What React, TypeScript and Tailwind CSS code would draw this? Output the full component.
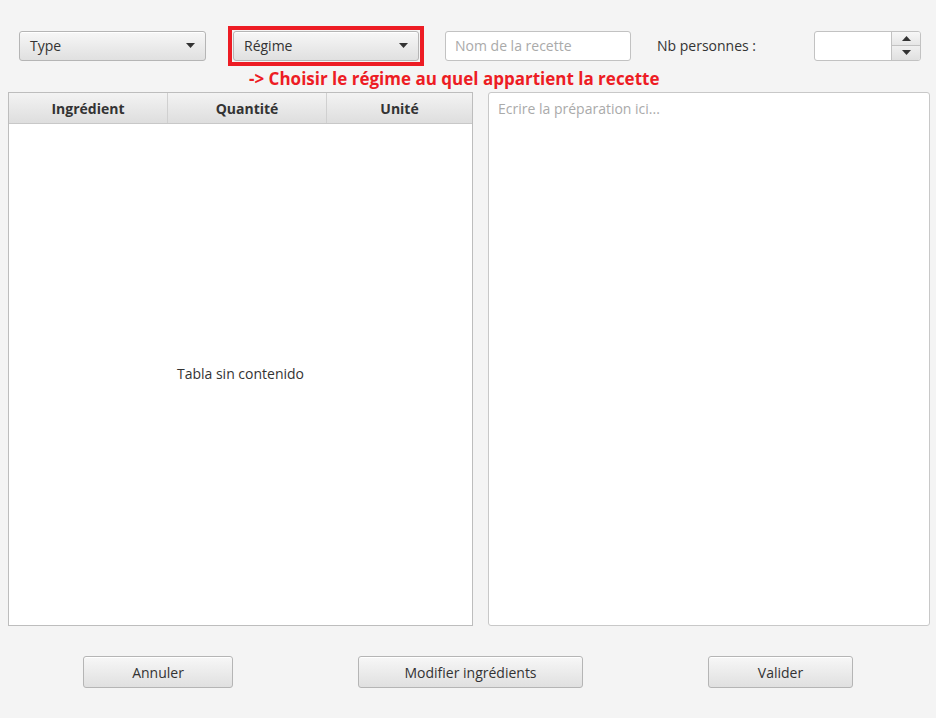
const Arrow = ({ up = false }: { up?: boolean }) => (
  <svg width="9" height="5" viewBox="0 0 9 5" className="shrink-0">
    <path d={up ? 'M0 5 L4.5 0 L9 5 Z' : 'M0 0 L9 0 L4.5 5 Z'} fill="#333333" />
  </svg>
);

const Combo = ({ label, width }: { label: string; width: string }) => (
  <div
    className={`${width} h-[30px] flex items-center justify-between pl-[10px] pr-[10px] rounded-[3px] border border-[#b5b5b5] bg-gradient-to-b from-[#f7f7f7] to-[#e0e0e0] shadow-[inset_0_1px_0_#ffffff] text-[14px] text-[#333333]`}
  >
    <span>{label}</span>
    <Arrow />
  </div>
);

const Button = ({ label, width }: { label: string; width: string }) => (
  <button
    className={`${width} h-[32px] flex items-center justify-center rounded-[3px] border border-[#b5b5b5] bg-gradient-to-b from-[#f7f7f7] to-[#e0e0e0] shadow-[inset_0_1px_0_#ffffff] text-[14px] text-[#333333]`}
  >
    {label}
  </button>
);

const App = () => {
  return (
    <div
      className="w-[936px] h-[718px] bg-[#f4f4f4] flex flex-col"
      style={{ fontFamily: '"Open Sans", "Noto Sans", sans-serif' }}
    >
      {/* top row */}
      <div className="pt-[25px] h-[66px] flex items-center">
        <div className="ml-[19px]">
          <Combo label="Type" width="w-[187px]" />
        </div>
        <div className="ml-[22px] border-4 border-[#ed1c24] p-px">
          <Combo label="Régime" width="w-[186px]" />
        </div>
        <input
          readOnly
          placeholder="Nom de la recette"
          className="ml-[21px] w-[186px] h-[30px] px-[9px] rounded-[3px] border border-[#c2c2c2] bg-white text-[14px] placeholder:text-[#aaaaaa] outline-none"
        />
        <div className="ml-[26px] w-[157px] text-[14px] text-[#333333]">Nb personnes :</div>
        <div className="w-[107px] h-[30px] flex rounded-[3px] border border-[#c2c2c2] bg-white overflow-hidden">
          <div className="flex-1" />
          <div className="w-[29px] flex flex-col border-l border-[#c2c2c2]">
            <div className="flex-1 flex items-center justify-center bg-gradient-to-b from-[#f7f7f7] to-[#e6e6e6] border-b border-[#c2c2c2]">
              <Arrow up />
            </div>
            <div className="flex-1 flex items-center justify-center bg-gradient-to-b from-[#f0f0f0] to-[#e0e0e0]">
              <Arrow />
            </div>
          </div>
        </div>
      </div>

      {/* annotation */}
      <div className="h-[26px] pl-[249px] text-[17px] leading-[26px] font-bold text-[#ed1c24]">
        -&gt; Choisir le régime au quel appartient la recette
      </div>

      {/* panels */}
      <div className="h-[534px] flex gap-[15px] pl-[8px]">
        <div className="w-[465px] flex flex-col border border-[#bdbdbd] bg-white">
          <div className="h-[31px] flex bg-gradient-to-b from-[#f3f3f3] to-[#dedede] border-b border-[#c8c8c8] text-[14px] font-bold text-[#333333]">
            <div className="w-[159px] flex items-center justify-center border-r border-[#d0d0d0]">Ingrédient</div>
            <div className="w-[159px] flex items-center justify-center border-r border-[#d0d0d0]">Quantité</div>
            <div className="flex-1 flex items-center justify-center">Unité</div>
          </div>
          <div className="flex-1 flex items-center justify-center text-[14px] text-[#333333] pb-[2px]">
            Tabla sin contenido
          </div>
        </div>
        <div className="w-[442px] border border-[#c8c8c8] rounded-[3px] bg-white px-[9px] pt-[5px] text-[14px] text-[#aaaaaa]">
          Ecrire la préparation ici...
        </div>
      </div>

      {/* buttons */}
      <div className="mt-[30px] flex">
        <div className="ml-[83px]">
          <Button label="Annuler" width="w-[150px]" />
        </div>
        <div className="ml-[125px]">
          <Button label="Modifier ingrédients" width="w-[225px]" />
        </div>
        <div className="ml-[125px]">
          <Button label="Valider" width="w-[145px]" />
        </div>
      </div>
    </div>
  );
};

export default App;
